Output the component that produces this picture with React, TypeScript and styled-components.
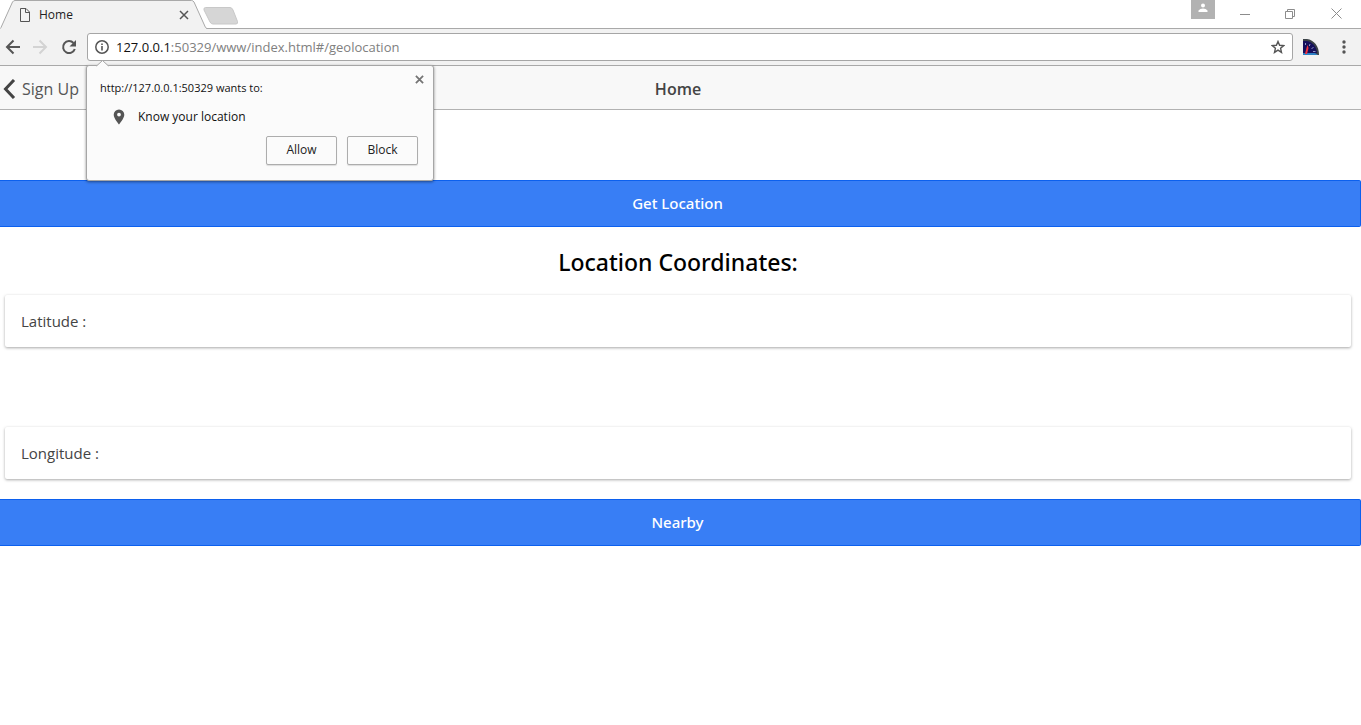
import React from "react";
import styled, { createGlobalStyle } from "styled-components";

const GlobalStyle = createGlobalStyle`
  * { box-sizing: border-box; }
  body { margin: 0; background: #fff; font-family: "Open Sans", "Noto Sans", sans-serif; }
  button { font-family: inherit; cursor: pointer; }
  svg { display: block; flex: none; }
`;

const IconButton = styled.button<{ $w: number; $h: number }>`
  display: flex;
  flex: none;
  align-items: center;
  justify-content: center;
  width: ${(p) => p.$w}px;
  height: ${(p) => p.$h}px;
  padding: 0;
  border: 0;
  background: none;
`;

const TabStrip = styled.div`
  display: flex;
  height: 29px;
  border-bottom: 1px solid #a9a9a9;
`;

const Tab = styled.div`
  position: relative;
  display: flex;
  flex: none;
  align-items: center;
  width: 207px;
  height: 29px;
  padding: 1px 16px 0 19px;
`;

const TabShape = styled.svg`
  position: absolute;
  inset: 0;
`;

const TabTitle = styled.span`
  position: relative;
  flex: 1;
  margin-left: 8px;
  font-size: 12px;
  line-height: 16px;
  color: #222;
`;

const TabPart = styled.div`
  position: relative;
`;

const WindowControls = styled.div`
  display: flex;
  margin-left: auto;
`;

const Profile = styled.button`
  display: flex;
  justify-content: center;
  width: 24px;
  height: 19px;
  margin-right: 7px;
  padding: 3px 0 0;
  border: 0;
  background: #b2b2b2;
`;

const Toolbar = styled.div`
  display: flex;
  align-items: center;
  height: 37px;
  background: #f2f2f2;
  border-bottom: 1px solid #a9a9a9;
`;

const Navigation = styled.div`
  display: flex;
  width: 87px;
`;

const AddressBar = styled.div`
  position: relative;
  display: flex;
  flex: 1;
  align-items: center;
  height: 28px;
  padding: 0 7px;
  border: 1px solid #a6a6a6;
  border-radius: 3px;
  background: #fff;
  font-size: 13px;
`;

const Host = styled.label`
  margin-left: 7px;
  color: #111;
`;

const Address = styled.input`
  flex: 1;
  min-width: 0;
  padding: 0;
  border: 0;
  outline: 0;
  background: none;
  font: inherit;
  color: #808080;
`;

const Extensions = styled.div`
  display: flex;
  align-items: center;
  gap: 12px;
  padding: 0 5px 0 10px;
`;

const Prompt = styled.div`
  position: absolute;
  z-index: 2;
  top: 31px;
  left: -2px;
  width: 348px;
  padding: 13px 15px 15px 13px;
  border: 1px solid #a6a6a6;
  border-radius: 3px;
  background: #fbfbfb;
  box-shadow: 0 1px 3px rgba(0, 0, 0, 0.45);
  font-size: 12px;
  line-height: 18px;
  color: #111;
`;

const PromptOrigin = styled.div`
  font-size: 11px;
`;

const PromptArrow = styled.svg`
  position: absolute;
  top: -6px;
  left: 9px;
`;

const PromptClose = styled(IconButton)`
  position: absolute;
  top: 5px;
  right: 6px;
`;

const PromptRow = styled.div`
  display: flex;
  align-items: center;
  gap: 12px;
  margin: 11px 0 10px 12px;
`;

const PromptActions = styled.div`
  display: flex;
  justify-content: flex-end;
  gap: 10px;
`;

const PromptButton = styled.button`
  width: 71px;
  height: 29px;
  padding: 0 0 2px;
  border: 1px solid #adadad;
  border-radius: 2px;
  background: #fbfbfb;
  box-shadow: 0 1px 1px rgba(0, 0, 0, 0.12);
  font-size: 12px;
  color: #222;
`;

const AppHeader = styled.header`
  display: grid;
  grid-template-columns: 1fr auto 1fr;
  align-items: center;
  height: 44px;
  padding: 2px 5px 0 0;
  border-bottom: 1px solid #b2b2b2;
  background: #f8f8f8;
  color: #444;
`;

const BackLink = styled.a`
  display: flex;
  align-items: center;
  gap: 6px;
  padding-left: 3px;
  color: #555;
  font-size: 16px;
  text-decoration: none;
`;

const Title = styled.h1`
  margin: 0;
  font-size: 16px;
  font-weight: 600;
  line-height: 24px;
`;

const Content = styled.main`
  padding-top: 70px;
`;

const FullButton = styled.button`
  display: block;
  width: 100%;
  height: 47px;
  padding: 0 5px 2px 0;
  border: 1px solid #0c60ee;
  border-left: 0;
  border-radius: 0 2px 2px 0;
  background: #387ef5;
  color: #fff;
  font-family: "Noto Sans", sans-serif;
  font-size: 15px;
  font-weight: 500;
`;

const Heading = styled.h2`
  margin: 19px 5px 17px 0;
  font-family: "Noto Sans", sans-serif;
  font-size: 23px;
  font-weight: 500;
  line-height: 32px;
  text-align: center;
  color: #000;
`;

const Card = styled.section<{ $gap: number }>`
  margin: 0 10px ${(p) => p.$gap}px 5px;
  padding: 14px 16px;
  border-radius: 2px;
  background: #fff;
  box-shadow: 0 1px 3px rgba(0, 0, 0, 0.35);
  font-size: 15px;
  line-height: 24px;
  color: #444;
`;

function Cross({ size, color, width }: { size: number; color: string; width: number }) {
  return (
    <svg width={size} height={size} viewBox="0 0 10 10" stroke={color} strokeWidth={width}>
      <path d="M1 1L9 9M9 1L1 9" />
    </svg>
  );
}

function Speedometer() {
  return (
    <svg width="16" height="16" viewBox="0 0 16 16">
      <path d="M0 0H4C11 1 16 7 16 16H0Z" fill="#3b4247" />
      <path d="M0 2H3C9 2.500 13.500 7 14 14H0Z" fill="#15105c" />
      <path d="M0 14H12L15 16H0Z" fill="#2b7fc4" />
      <path d="M2.500 4V6M7 5L6.300 7M10.500 8L8.500 10M12.500 12.500H10" stroke="#8f95c4" strokeWidth="1" />
      <path d="M4.500 6L5.500 9L4 15H2L3.500 9Z" fill="#f2333f" />
    </svg>
  );
}

export default function App() {
  return (
    <>
      <GlobalStyle />
      <TabStrip>
        <Tab>
          <TabShape width="207" height="29" viewBox="0 0 207 29">
            <path d="M0 29L1 27.500L12.500 2Q13.500 .5 15 .5H191.500Q193 .5 194 2L205.500 27.500L207 29Z" fill="#f2f2f2" />
            <path d="M0 28.500L1 27.500L12.500 2Q13.500 .5 15 .5H191.500Q193 .5 194 2L205.500 27.500L207 28.500" fill="none" stroke="#a9a9a9" />
          </TabShape>
          <TabPart>
            <svg width="12" height="14" viewBox="0 0 12 14" fill="none" stroke="#555">
              <path d="M1.500 .5H7L10.500 4V13.500H1.500ZM6.500 .5V4.500H10.500" />
            </svg>
          </TabPart>
          <TabTitle>Home</TabTitle>
          <TabPart>
            <IconButton $w={14} $h={14} aria-label="Close tab">
              <Cross size={10} color="#555" width={1.5} />
            </IconButton>
          </TabPart>
        </Tab>
        <IconButton $w={28} $h={31} aria-label="New tab">
          <svg width="36" height="18" viewBox="0 0 36 18">
            <path d="M2.500 .5H27Q29 .5 30 3L34.500 14.500Q35 17 33 17H10Q8 17 7 15L1 3Q.5 .5 2.500 .5Z" fill="#d6d6d6" stroke="#c8c8c8" />
          </svg>
        </IconButton>
        <WindowControls>
          <Profile aria-label="Profile">
            <svg width="10" height="10" viewBox="0 0 10 10" fill="#fff">
              <circle cx="5" cy="2.500" r="2" />
              <path d="M.5 9V7.500Q2 5.500 5 5.500T9.500 7.500V9Z" />
            </svg>
          </Profile>
          <IconButton $w={46} $h={27} aria-label="Minimize">
            <svg width="10" height="10" viewBox="0 0 10 10" stroke="#8c8c8c"><path d="M0 5.500H10" /></svg>
          </IconButton>
          <IconButton $w={44} $h={27} aria-label="Restore">
            <svg width="10" height="10" viewBox="0 0 10 10" fill="none" stroke="#8c8c8c">
              <path d="M.5 2.500H7.500V9.500H.5ZM2.500 2.500V.5H9.500V7.500H7.500" />
            </svg>
          </IconButton>
          <IconButton $w={49} $h={27} aria-label="Close window">
            <svg width="11" height="11" viewBox="0 0 11 11" stroke="#8c8c8c"><path d="M.5 .5L10.500 10.500M10.500 .5L.5 10.500" /></svg>
          </IconButton>
        </WindowControls>
      </TabStrip>

      <Toolbar>
        <Navigation>
          <IconButton $w={26} $h={28} aria-label="Back">
            <svg width="16" height="16" viewBox="0 0 16 16" fill="none" stroke="#555" strokeWidth="2">
              <path d="M15 8H2M8.500 1.500L2 8L8.500 14.500" />
            </svg>
          </IconButton>
          <IconButton $w={28} $h={28} aria-label="Forward">
            <svg width="16" height="16" viewBox="0 0 16 16" fill="none" stroke="#d3d3d3" strokeWidth="2">
              <path d="M1 8H14M7.500 1.500L14 8L7.500 14.500" />
            </svg>
          </IconButton>
          <IconButton $w={30} $h={28} aria-label="Reload">
            <svg width="16" height="16" viewBox="0 0 16 16">
              <path d="M13.800 10A6 6 0 1 1 12.500 4" fill="none" stroke="#555" strokeWidth="2" />
              <path d="M15 1V7.500H8.500Z" fill="#555" />
            </svg>
          </IconButton>
        </Navigation>
        <AddressBar>
          <svg width="14" height="14" viewBox="0 0 14 14">
            <circle cx="7" cy="7" r="6.200" fill="none" stroke="#555" strokeWidth="1.500" />
            <path d="M6.200 3.500H7.800V5H6.200ZM6.200 6H7.800V10.500H6.200Z" fill="#555" />
          </svg>
          <Host htmlFor="address">127.0.0.1</Host>
          <Address id="address" defaultValue=":50329/www/index.html#/geolocation" />
          <IconButton $w={14} $h={14} aria-label="Bookmark">
            <svg width="14" height="14" viewBox="0 0 14 14" fill="none" stroke="#555" strokeWidth="1.400">
              <path d="M7 1.500L8.600 5.300L12.700 5.600L9.600 8.300L10.500 12.400L7 10.200L3.500 12.400L4.400 8.300L1.300 5.600L5.400 5.300Z" />
            </svg>
          </IconButton>
          <Prompt role="dialog" aria-label="Location permission">
            <PromptArrow width="13" height="7" viewBox="0 0 13 7">
              <path d="M0 7V6.500L6.500 .5L13 6.500V7Z" fill="#fbfbfb" />
              <path d="M.5 6L6.500 .5L12.500 6" fill="none" stroke="#a6a6a6" />
            </PromptArrow>
            <PromptClose $w={16} $h={16} aria-label="Dismiss">
              <Cross size={9} color="#757575" width={2} />
            </PromptClose>
            <PromptOrigin>http://127.0.0.1:50329 wants to:</PromptOrigin>
            <PromptRow>
              <svg width="14" height="16" viewBox="0 0 14 16">
                <path fillRule="evenodd" d="M7 .5A5.300 5.300 0 0 0 1.700 5.800C1.700 9.500 7 15.500 7 15.500S12.300 9.500 12.300 5.800A5.300 5.300 0 0 0 7 .5ZM7 3.700A1.900 1.900 0 1 1 7 7.500A1.900 1.900 0 1 1 7 3.700Z" fill="#555" />
              </svg>
              <span>Know your location</span>
            </PromptRow>
            <PromptActions>
              <PromptButton>Allow</PromptButton>
              <PromptButton>Block</PromptButton>
            </PromptActions>
          </Prompt>
        </AddressBar>
        <Extensions>
          <IconButton $w={16} $h={16} aria-label="Speed extension"><Speedometer /></IconButton>
          <IconButton $w={25} $h={26} aria-label="Menu">
            <svg width="4" height="14" viewBox="0 0 4 14" fill="#555">
              <circle cx="2" cy="2" r="1.700" /><circle cx="2" cy="7" r="1.700" /><circle cx="2" cy="12" r="1.700" />
            </svg>
          </IconButton>
        </Extensions>
      </Toolbar>

      <AppHeader>
        <BackLink href="#/signup">
          <svg width="13" height="20" viewBox="0 0 13 20" fill="none" stroke="#444" strokeWidth="3">
            <path d="M11 1L2.500 10L11 19" />
          </svg>
          Sign Up
        </BackLink>
        <Title>Home</Title>
      </AppHeader>
      <Content>
        <FullButton>Get Location</FullButton>
        <Heading>Location Coordinates:</Heading>
        <Card $gap={80}>Latitude :</Card>
        <Card $gap={20}>Longitude :</Card>
        <FullButton>Nearby</FullButton>
      </Content>
    </>
  );
}
